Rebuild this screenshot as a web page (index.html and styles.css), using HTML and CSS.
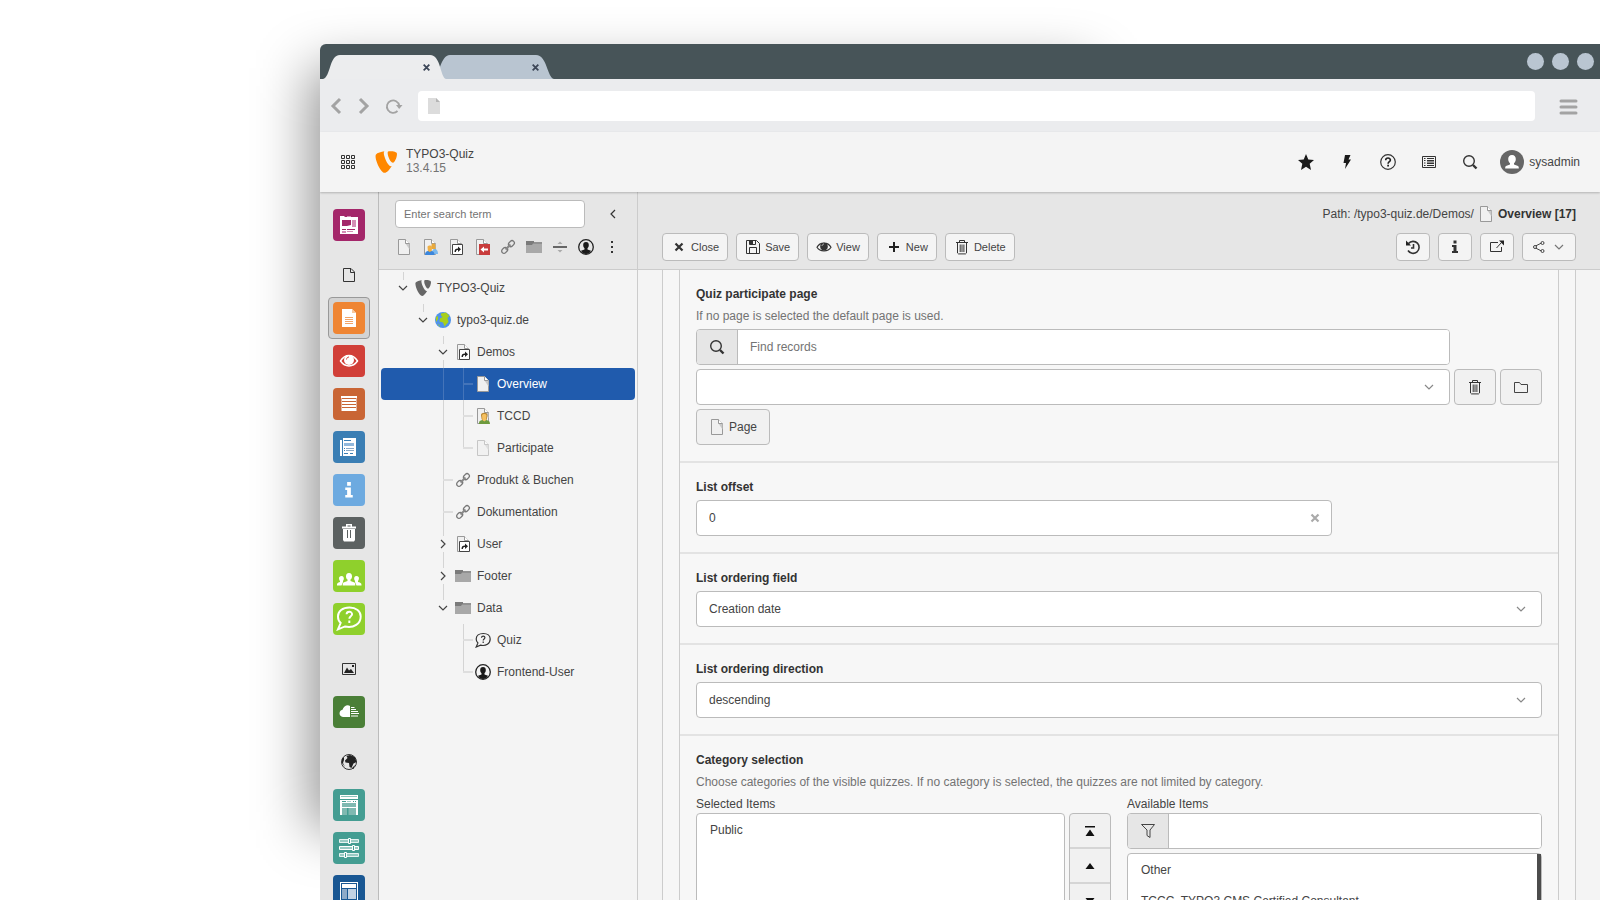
FILE: index.html
```html
<!DOCTYPE html>
<html lang="en">
<head>
<meta charset="utf-8">
<title>TYPO3-Quiz</title>
<link rel="stylesheet" href="styles.css">
</head>
<body>
<svg class="sprite" aria-hidden="true">
  <symbol id="doc" viewBox="0 0 16 16"><path d="M2.5.5h7l4 4v11h-11z" fill="#f0f0f0" stroke="#999"/><path d="M9.500.5v4l4 6v-6z" fill="#c9c9c9"/><path d="M9.500.5v4h4" fill="#fff" stroke="#999"/></symbol>
  <symbol id="doc-line" viewBox="0 0 16 16"><path d="M2.500 1.500h7.500l3.500 3.500v9.500h-11zM9.500 1.500v4h4" fill="none" stroke="#333"/></symbol>
  <symbol id="doc-user" viewBox="0 0 16 16"><use href="#doc"/><path d="M9.500 5.500c0-1.500 3.800-1.500 3.800 0L13.500 10h-4z" fill="#e8a93d"/><path d="M10 15c0-4 1-5 2.500-5 2.500 0 3.500 2 3.500 5z" fill="#7ab8ee"/><path d="M5.500 8c0-2 4.500-2 4.500 0l-.3 5H6z" fill="#f0b046"/><path d="M3 16c0-3 1.500-4 3-4l1.800 1 1.700-1c1.500 0 3 1 3 4z" fill="#3b86dc"/></symbol>
  <symbol id="doc-one" viewBox="0 0 16 16"><use href="#doc"/><path d="M6 7c0-3 6.500-3 6.500 0l-.5 3.500-1 3H7.500l-1-3z" fill="#b98732"/><path d="M7 7.500c0-2 4.500-2 4.500 0L11 13H7.500z" fill="#f5c060"/><path d="M4 16c0-3 1-3.500 3.300-4l2 1.500 2-1.500C13.500 12.500 15 13 15 16z" fill="#6d9a3d"/></symbol>
  <symbol id="doc-short" viewBox="0 0 16 16"><use href="#doc"/><path d="M4.500 5.500h10v10h-10z" fill="#fff" stroke="#444"/><path d="M10 7.500l3 2.800-3 2.700v-2c-1.500 0-2 .5-2 2H6.500C6.500 10.500 7.500 9.500 10 9.500z" fill="#222"/></symbol>
  <symbol id="doc-back" viewBox="0 0 16 16"><use href="#doc"/><path d="M5 5h11v11H5z" fill="#c83c3c"/><path d="M10 7.500v2h4v2h-4v2l-3.500-3z" fill="#fff"/></symbol>
  <symbol id="link" viewBox="0 0 16 16"><g transform="rotate(-45 8 8)" fill="none" stroke-width="1.300"><rect x="0" y="5.700" width="6.500" height="4.600" rx="2.300" stroke="#777"/><rect x="9.500" y="5.700" width="6.500" height="4.600" rx="2.300" stroke="#777"/><path d="M4.500 8h7" stroke="#888" stroke-width="2"/></g></symbol>
  <symbol id="folder" viewBox="0 0 16 16"><path d="M0 2h8v1h8v11H0z" fill="#a8a8a8"/><path d="M0 2h8v1.500h8v1H7L6 6H0z" fill="#7a7a7a"/></symbol>
  <symbol id="divider" viewBox="0 0 16 16"><path d="M1 7h14v2H1z" fill="#666"/><path d="M5.500 5L8 2.500 10.500 5zM5.500 11L8 13.500 10.500 11z" fill="#aaa"/></symbol>
  <symbol id="person" viewBox="0 0 16 16"><circle cx="8" cy="8" r="7.300" fill="none" stroke="#222" stroke-width="1.300"/><path d="M8 3c2 0 2.800 1.300 2.800 3 0 1.500-.5 2.500-1.300 3.200v1.300l3.500 1.300C12 14 10 15 8 15s-4-1-5-3.200l3.500-1.300V9.200C5.700 8.500 5.200 7.500 5.200 6c0-1.700.8-3 2.800-3z" fill="#1a1a1a"/></symbol>
  <symbol id="dots" viewBox="0 0 16 16"><path d="M7 2h2v2H7zM7 7h2v2H7zM7 12h2v2H7z" fill="#333"/></symbol>
  <symbol id="typo3" viewBox="0 0 16 16"><path d="M12.100 10.900c-.2.100-.400.100-.700.100-2 0-5-7.100-5-9.400 0-.9.200-1.100.5-1.400C4.500.5 1.600 1.400.7 2.500.5 2.800.4 3.200.4 3.800c0 3.700 3.900 12.100 6.700 12.100 1.300 0 3.400-2.100 5-5M10.900.1c2.600 0 5.100.4 5.100 1.900 0 3-1.900 6.600-2.900 6.600-1.700 0-3.900-4.800-3.900-7.200 0-1.100.4-1.300 1.700-1.300" fill="currentColor"/></symbol>
  <symbol id="globe" viewBox="0 0 16 16"><circle cx="8" cy="8" r="8" fill="#4f93ea"/><path d="M6 1.500l5-1L14.500 4l-2 2 1 4-4 4.500-1.500-4-3.500-1 .5-3 2.500-1.500L6 3.500zM1 5l2-1v3l-2 3zM2.500 12l2 1 .5 2z" fill="#a6cf1c"/></symbol>
  <symbol id="globe-bw" viewBox="0 0 16 16"><circle cx="8" cy="8" r="7.500" fill="none" stroke="#333"/><path d="M9 1l5 2 1.500 5-3 1.500-2 4.500-2-1-.5-4-3.500-.5-.5-2L6.500 4l-1-2zM11 14l3-3-1.500 4zM1 5l2-2v3l-1 3 2 4-3-4z" fill="#222"/></symbol>
  <symbol id="quiz" viewBox="0 0 16 16"><path d="M8.300 1.500C4 1.500 1.200 3.800 1.200 7c0 1.800.6 3 1.700 4L1.200 15l4.300-1.800c5.500 1.200 9.700-1.700 9.700-6.200 0-3.300-2.800-5.500-6.900-5.500z" fill="none" stroke="currentColor" stroke-width="1.200"/><path d="M6.500 5.700c.1-2 3.400-2 3.400 0 0 1.200-1.700 1.300-1.700 2.800M8.200 9.600V11" fill="none" stroke="currentColor" stroke-width="1.200"/></symbol>
  <symbol id="down" viewBox="0 0 16 16"><path d="M4 6l4 4 4-4" fill="none" stroke="currentColor" stroke-width="1.200"/></symbol>
  <symbol id="right" viewBox="0 0 16 16"><path d="M6 4l4 4-4 4" fill="none" stroke="currentColor" stroke-width="1.200"/></symbol>
  <symbol id="left" viewBox="0 0 16 16"><path d="M10 4L6 8l4 4" fill="none" stroke="currentColor" stroke-width="1.200"/></symbol>
  <symbol id="search" viewBox="0 0 16 16"><circle cx="7" cy="7" r="5.300" fill="none" stroke="#333" stroke-width="1.400"/><path d="M11 11l3.500 3.500" stroke="#333" stroke-width="2.400"/></symbol>
  <symbol id="trash" viewBox="0 0 16 16"><path d="M2 3.500h12M5.500 3.500v-2h5v2M3.500 3.500v10.500l1 .9h7l1-.9V3.500M6.200 5.500v7.500M8 5.500v7.500M9.900 5.500v7.500" fill="none" stroke="#333" stroke-width="1"/></symbol>
  <symbol id="close" viewBox="0 0 16 16"><path d="M4.500 4.500l7 7M11.500 4.500l-7 7" stroke="currentColor" stroke-width="2.200"/></symbol>
  <symbol id="save" viewBox="0 0 16 16"><path d="M1.500 1.500h10l3 3v10h-13z M4.500 1.500v4h6v-4M4.500 14.500v-6h7v6" fill="none" stroke="#333"/><path d="M5 1.500h3V5H5z" fill="#333"/></symbol>
  <symbol id="eye" viewBox="0 0 16 16"><path d="M1 8.200C4 2.700 12 2.700 15 8.200 12 13 4 13 1 8.200z" fill="none" stroke="currentColor" stroke-width="1.200"/><circle cx="8" cy="7.500" r="3.800" fill="currentColor"/><path d="M6 7c.2-1.200.9-1.900 2-2" fill="none" stroke="#bbb"/></symbol>
  <symbol id="plus" viewBox="0 0 16 16"><path d="M3 8h10M8 3v10" stroke="#222" stroke-width="2"/></symbol>
  <symbol id="history" viewBox="0 0 16 16"><path d="M3.500 4.500A6 6 0 1 1 3 11.500M8.500 5v4H6" fill="none" stroke="#333" stroke-width="1.600"/><path d="M1 1.500V6.500h5z" fill="#222"/></symbol>
  <symbol id="info" viewBox="0 0 16 16"><path d="M6.500 1.500h3v3h-3zM5 6h4.500v6H11v2H5v-2h1.500V8H5z" fill="currentColor"/></symbol>
  <symbol id="open" viewBox="0 0 16 16"><path d="M9 3.500H1.500v9h11V8M7.500 9l5-5.500" fill="none" stroke="#333"/><path d="M10 1.500h5v5z" fill="#222"/></symbol>
  <symbol id="share" viewBox="0 0 16 16"><path d="M4.500 7l6-3M4.500 9l6 3" stroke="#444"/><g fill="#f4f4f4" stroke="#444"><circle cx="4" cy="8" r="1.500"/><circle cx="11.500" cy="4" r="1.500"/><circle cx="11.500" cy="12" r="1.500"/></g></symbol>
  <symbol id="dir" viewBox="0 0 16 16"><path d="M1.500 3.500h5l1.500 2h6.500v8h-13z" fill="none" stroke="#444"/></symbol>
  <symbol id="grid" viewBox="0 0 16 16"><path d="M1.500 1.500h3v3h-3zM6.500 1.500h3v3h-3zM11.500 1.500h3v3h-3zM1.500 6.500h3v3h-3zM6.500 6.500h3v3h-3zM11.500 6.500h3v3h-3zM1.500 11.500h3v3h-3zM6.500 11.500h3v3h-3zM11.500 11.500h3v3h-3z" fill="none" stroke="#333"/></symbol>
  <symbol id="star" viewBox="0 0 16 16"><path d="M8 0l2.300 5.400 5.700.5-4.300 3.900L13 16l-5-3.200L3 16l1.300-6.200L0 5.900l5.700-.5z" fill="#1a1a1a"/></symbol>
  <symbol id="bolt" viewBox="0 0 16 16"><path d="M6 1h5.500L9.500 5.500H12L6 15l1-6H4.500z" fill="#1a1a1a"/></symbol>
  <symbol id="help" viewBox="0 0 16 16"><circle cx="8" cy="8" r="7.300" fill="none" stroke="#333" stroke-width="1.200"/><path d="M5.700 6.300c0-3 4.700-2.900 4.700-.2 0 1.600-2.300 1.600-2.300 3.600" fill="none" stroke="#222" stroke-width="1.600"/><path d="M7.200 10.800H9v1.700H7.200z" fill="#222"/></symbol>
  <symbol id="list" viewBox="0 0 16 16"><path d="M1.500 2.500h13v11h-13z" fill="none" stroke="#333"/><path d="M3 4h1.500v1H3zM3 6h1.500v1H3zM3 8.500h1.500v1H3zM3 11h1.500v1H3zM6 4h7v1H6zM6 6h7v1.500H6zM6 8.500h7V10H6zM6 11h7v1H6z" fill="#333"/></symbol>
  <symbol id="image" viewBox="0 0 16 16"><path d="M1.500 2.500h13v11h-13z" fill="none" stroke="#333"/><path d="M3 12l3-5.500 2 3L10 8l3 4zM11 4h2v2h-2z" fill="#222"/></symbol>
  <symbol id="filter" viewBox="0 0 16 16"><path d="M1.500 1.500h13L10 7v7.500L7 12.500V7z" fill="none" stroke="#444"/></symbol>
  <symbol id="top" viewBox="0 0 16 16"><path d="M3 3h10v1.500H3zM3.500 13L8 6.500l4.500 6.500z" fill="#111"/></symbol>
  <symbol id="up" viewBox="0 0 16 16"><path d="M3.500 11L8 5l4.500 6z" fill="#111"/></symbol>
  <symbol id="m-dash" viewBox="0 0 32 32"><path d="M7 7h4l1 1h13v17H7z" fill="#fff"/><path d="M9 11h9v5l-4 1H9zM9 20h4v1H9zM14 20h8v1h-8z" fill="#a4276a"/><path d="M19 11h4v7h-4zM9 22h4v2H9zM14 22h6v1h-6zM14 7h4v1h-4z" fill="#d48fb5"/></symbol>
  <symbol id="m-page" viewBox="0 0 32 32"><path d="M9 7h10l4 4v14H9z" fill="#fff"/><path d="M19 7v4h4z" fill="#f7c79c"/><path d="M12 15h8v1h-8zM12 17h8v1h-8zM12 19h8v1h-8zM12 21h8v1h-8z" fill="#f2a468"/></symbol>
  <symbol id="m-eye" viewBox="0 0 32 32"><path d="M7.500 16C12 8.500 20 8.500 24.500 16 20 22.500 12 22.500 7.500 16z" fill="none" stroke="#fff" stroke-width="1.500"/><circle cx="16" cy="15" r="5" fill="#fff"/><path d="M13.500 14.500c.2-1.500 1-2.500 2.500-2.500" fill="none" stroke="#d13f38"/></symbol>
  <symbol id="m-list" viewBox="0 0 32 32"><path d="M8 8h16v2H8zM8 11h16v2H8zM8 14h16v2H8zM8 17h16v2H8zM8 20h16v3H8z" fill="#fff"/><path d="M8 10h1v13H8zM23 10h1v13h-1z" fill="#e2b09a"/></symbol>
  <symbol id="m-news" viewBox="0 0 32 32"><path d="M7 9h2v16H7zM10 7h13v18H10z" fill="#fff"/><path d="M11 9h7v1h-7zM11 22h4v1h-4zM17 22h3v1h-3zM11 17h1v1h-1zM11 19h1v1h-1z" fill="#3a7eb4"/><path d="M11 12h10v3H11z" fill="#91b8dc"/><path d="M13 17h8v1h-8zM13 19h8v1h-8z" fill="#8aa9c7"/></symbol>
  <symbol id="m-trash" viewBox="0 0 32 32"><path d="M9 9.500h4V7h6v2.500h4v2H9zM10 12h12v11l-1 1.500H11L10 23z" fill="#fff"/><path d="M14.500 8.500h3v1h-3zM14 13v8h1v-8zM17 13v8h1v-8z" fill="#5c6161"/></symbol>
  <symbol id="m-users" viewBox="0 0 32 32"><g fill="#fff"><path d="M16 13c2.200 0 3 1.500 3 3.500 0 1.500-.7 2.500-1.500 3v1.500l4 1.500c.8.500.8 1.500.8 3H9.700c0-1.500 0-2.500.8-3l4-1.500v-1.500c-.8-.5-1.500-1.500-1.500-3 0-2 .8-3.500 3-3.500z"/><path d="M8.500 16c2 0 2.500 1.500 2.300 3-.1 1-.6 1.500-.8 2v1l-1.500 3.500H4c0-2.500.5-2.500 3-3.500v-1c-1-1-2-5 1.500-5zM23.500 16c-2 0-2.500 1.500-2.300 3 .1 1 .6 1.500.8 2v1l1.500 3.500H28.500c0-2.500-.5-2.500-3.500-3.500v-1c1-1 2-5-1.500-5z"/></g></symbol>
  <symbol id="m-cloud" viewBox="0 0 32 32"><path d="M17 21h-7c-4.500-.5-4.500-6.500-.5-7.200C10.500 9.500 15 8 17 10z" fill="#fff"/><path d="M18 11.500h3.500M18 13.500h5M18 15.500h7M18 17.500h8M18 20h7" stroke="#fff"/></symbol>
  <symbol id="m-site" viewBox="0 0 32 32"><path d="M7 6h18v4H7zM7 11h18v15h-2v-7H9v7H7z" fill="#fff"/><path d="M8 7.500h16" stroke="#8fc4bc"/><path d="M9 14h14v4H9zM9 19h5v7H9zM15.500 19H23v7h-7.500z" fill="#7fb9b1"/><path d="M9 12.500h4M14.500 12.500h1M16.500 12.500h1M20 12.500h1M22 12.500h1" stroke="#449d92"/></symbol>
  <symbol id="m-slide" viewBox="0 0 32 32"><g fill="#9acbc4" stroke="#e4f2f0"><path d="M6.500 7.500h19v3h-19zM6.500 21.500h19v3h-19z"/><path d="M6.500 14.500h19v3h-19z" stroke="#fff"/></g><g fill="#449d92" stroke="#fff"><path d="M15.500 6.500h2v5h-2zM19.500 13.500h2v5h-2zM11.500 20.500h2v5h-2z"/></g></symbol>
  <symbol id="m-layout" viewBox="0 0 32 32"><path d="M7 7h18v19H7z" fill="#fff"/><path d="M8 8h16v17H8z" fill="#195793"/><path d="M9 9h14v4H9z" fill="#fff"/><path d="M9 14h5v10H9z" fill="#8daac8"/><path d="M15 14h8v10h-8z" fill="#c3d3e4"/></symbol>
</svg>

<div class="backdrop"></div>
<div class="window">
  <div class="titlebar">
    <div class="tabs">
      <svg class="tab-shapes" width="240" height="25" viewBox="0 0 240 25" aria-hidden="true"><path d="M112 25c8-2 8-24 18-24h86c11 0 11 22 18 24z" fill="#b9c5d1"/><path d="M3 25C11 23 9 1 20 1h90c11 0 10 22 16 24z" fill="#ecedee"/></svg>
      <button class="tab-close" aria-label="Close tab"><svg><use href="#close"/></svg></button>
      <button class="tab-close" aria-label="Close tab"><svg><use href="#close"/></svg></button>
    </div>
    <div class="lamps"><i></i><i></i><i></i></div>
  </div>
  <div class="addressbar">
    <button aria-label="Back"><svg width="14" height="18" viewBox="0 0 14 18"><path d="M11 2L4 9l7 7" fill="none" stroke="#a3a3a3" stroke-width="3"/></svg></button>
    <button aria-label="Forward"><svg width="14" height="18" viewBox="0 0 14 18"><path d="M3 2l7 7-7 7" fill="none" stroke="#a3a3a3" stroke-width="3"/></svg></button>
    <button class="reload" aria-label="Reload"><svg width="18" height="18" viewBox="0 0 18 18"><path d="M12.500 14A6.200 6.200 0 1 1 14.200 8.500" fill="none" stroke="#a3a3a3" stroke-width="1.800"/><path d="M11 8h6.500L14.200 12z" fill="#a3a3a3"/></svg></button>
    <label class="url"><svg width="12" height="16" viewBox="0 0 12 16"><path d="M0 0h8l4 4v12H0z" fill="#dcdcdc"/><path d="M8 0v4h4z" fill="#b5b5b5"/></svg><input type="text" aria-label="Address"></label>
    <button class="burger" aria-label="Menu"><svg width="20" height="18" viewBox="0 0 20 18"><path d="M2 4h15M2 10h15M2 16h15" stroke="#a3a3a3" stroke-width="3" stroke-linecap="round"/></svg></button>
  </div>

  <header class="top">
    <button class="apps" aria-label="Toggle modules"><svg><use href="#grid"/></svg></button>
    <svg class="logo"><use href="#typo3"/></svg>
    <div class="site"><span>TYPO3-Quiz</span><span class="muted">13.4.15</span></div>
    <div class="tools">
      <button aria-label="Bookmarks"><svg><use href="#star"/></svg></button>
      <button aria-label="Clear cache"><svg><use href="#bolt"/></svg></button>
      <button aria-label="Help"><svg><use href="#help"/></svg></button>
      <button aria-label="System information"><svg><use href="#list"/></svg></button>
      <button aria-label="Search"><svg><use href="#search"/></svg></button>
      <button class="user"><svg viewBox="0 0 24 24"><circle cx="12" cy="12" r="12" fill="#666"/><path d="M12 5c2.600 0 3.800 1.700 3.800 4 0 2-.8 3.400-1.800 4.200v1.300l4 1.500c.8.400.8 1.500.8 2.500H5.200c0-1 0-2.100.8-2.500l4-1.500v-1.300C9 12.400 8.200 11 8.200 9c0-2.300 1.200-4 3.800-4z" fill="#fff"/></svg>sysadmin</button>
    </div>
  </header>

  <div class="body">
    <nav class="rail" aria-label="Modules">
      <div class="group"><button aria-label="Dashboard"><svg class="magenta"><use href="#m-dash"/></svg></button></div>
      <div class="group">
        <button aria-label="Web"><svg class="plain"><use href="#doc-line"/></svg></button>
        <button class="active" aria-label="Page"><svg class="orange"><use href="#m-page"/></svg></button>
        <button aria-label="View"><svg class="red"><use href="#m-eye"/></svg></button>
        <button aria-label="List"><svg class="rust"><use href="#m-list"/></svg></button>
        <button aria-label="News"><svg class="blue"><use href="#m-news"/></svg></button>
        <button aria-label="Info"><svg class="sky" viewBox="0 0 32 32"><use href="#info" x="6" y="6" width="20" height="20"/></svg></button>
        <button aria-label="Recycler"><svg class="grey"><use href="#m-trash"/></svg></button>
        <button aria-label="Users"><svg class="lime"><use href="#m-users"/></svg></button>
        <button aria-label="Quiz"><svg class="lime" viewBox="0 0 32 32"><use href="#quiz" x="3" y="2" width="26" height="26"/></svg></button>
      </div>
      <div class="group">
        <button aria-label="File"><svg class="plain"><use href="#image"/></svg></button>
        <button aria-label="Filelist"><svg class="forest"><use href="#m-cloud"/></svg></button>
      </div>
      <div class="group">
        <button aria-label="Sites"><svg class="plain"><use href="#globe-bw"/></svg></button>
        <button aria-label="Site configuration"><svg class="teal"><use href="#m-site"/></svg></button>
        <button aria-label="Settings"><svg class="teal"><use href="#m-slide"/></svg></button>
        <button aria-label="Templates"><svg class="navy"><use href="#m-layout"/></svg></button>
      </div>
    </nav>

    <aside class="nav">
      <div class="nav-head">
        <div class="nav-search">
          <input type="text" placeholder="Enter search term" aria-label="Enter search term">
          <button aria-label="Collapse"><svg><use href="#left"/></svg></button>
        </div>
        <div class="nav-tools">
          <button aria-label="New page"><svg><use href="#doc"/></svg></button>
          <button aria-label="Backend user section"><svg><use href="#doc-user"/></svg></button>
          <button aria-label="Shortcut"><svg><use href="#doc-short"/></svg></button>
          <button aria-label="Mount point"><svg><use href="#doc-back"/></svg></button>
          <button aria-label="Link"><svg><use href="#link"/></svg></button>
          <button aria-label="Folder"><svg><use href="#folder"/></svg></button>
          <button aria-label="Separator"><svg><use href="#divider"/></svg></button>
          <button aria-label="User"><svg><use href="#person"/></svg></button>
          <button aria-label="More"><svg><use href="#dots"/></svg></button>
        </div>
      </div>
      <ul class="tree">
        <li><i class="c up"><svg><use href="#down"/></svg></i><svg class="ic grey-ic"><use href="#typo3"/></svg>TYPO3-Quiz</li>
        <li><i class="c"></i><i class="c up"><svg><use href="#down"/></svg></i><svg class="ic"><use href="#globe"/></svg>typo3-quiz.de</li>
        <li><i class="c"></i><i class="c"></i><i class="c up dn"><svg><use href="#down"/></svg></i><svg class="ic"><use href="#doc-short"/></svg>Demos</li>
        <li class="sel"><i class="c"></i><i class="c"></i><i class="c v"></i><i class="c v h"></i><svg class="ic"><use href="#doc"/></svg>Overview</li>
        <li><i class="c"></i><i class="c"></i><i class="c v"></i><i class="c v h"></i><svg class="ic"><use href="#doc-one"/></svg>TCCD</li>
        <li><i class="c"></i><i class="c"></i><i class="c v"></i><i class="c l h"></i><svg class="ic faded"><use href="#doc"/></svg>Participate</li>
        <li><i class="c"></i><i class="c"></i><i class="c v h"></i><svg class="ic"><use href="#link"/></svg>Produkt &amp; Buchen</li>
        <li><i class="c"></i><i class="c"></i><i class="c v h"></i><svg class="ic"><use href="#link"/></svg>Dokumentation</li>
        <li><i class="c"></i><i class="c"></i><i class="c up dn"><svg><use href="#right"/></svg></i><svg class="ic"><use href="#doc-short"/></svg>User</li>
        <li><i class="c"></i><i class="c"></i><i class="c up dn"><svg><use href="#right"/></svg></i><svg class="ic"><use href="#folder"/></svg>Footer</li>
        <li><i class="c"></i><i class="c"></i><i class="c up"><svg><use href="#down"/></svg></i><svg class="ic"><use href="#folder"/></svg>Data</li>
        <li><i class="c"></i><i class="c"></i><i class="c"></i><i class="c v h"></i><svg class="ic"><use href="#quiz"/></svg>Quiz</li>
        <li><i class="c"></i><i class="c"></i><i class="c"></i><i class="c l h"></i><svg class="ic"><use href="#person"/></svg>Frontend-User</li>
      </ul>
    </aside>

    <main class="main">
      <div class="dochead">
        <div class="path">Path: /typo3-quiz.de/Demos/<svg><use href="#doc"/></svg><b>Overview [17]</b></div>
        <div class="bar">
          <button class="btn"><svg><use href="#close"/></svg>Close</button>
          <button class="btn"><svg><use href="#save"/></svg>Save</button>
          <button class="btn"><svg><use href="#eye"/></svg>View</button>
          <button class="btn"><svg><use href="#plus"/></svg>New</button>
          <button class="btn"><svg><use href="#trash"/></svg>Delete</button>
          <span class="spring"></span>
          <button class="btn" aria-label="History"><svg><use href="#history"/></svg></button>
          <button class="btn" aria-label="Info"><svg><use href="#info"/></svg></button>
          <button class="btn" aria-label="Open in new window"><svg><use href="#open"/></svg></button>
          <button class="btn" aria-label="Share"><svg><use href="#share"/></svg><svg class="soft"><use href="#down"/></svg></button>
        </div>
      </div>
      <div class="scroll">
        <div class="outer"><div class="inner">
          <section class="field">
            <label class="title" for="find">Quiz participate page</label>
            <p class="hint">If no page is selected the default page is used.</p>
            <div class="records">
              <div class="stack">
                <div class="group-input"><span class="addon"><svg><use href="#search"/></svg></span><input id="find" type="text" placeholder="Find records"></div>
                <div class="select"><select aria-label="Selected page"><option></option></select><svg><use href="#down"/></svg></div>
              </div>
              <button class="sq" aria-label="Remove"><svg><use href="#trash"/></svg></button>
              <button class="sq" aria-label="Browse"><svg><use href="#dir"/></svg></button>
            </div>
            <button class="sq page"><svg><use href="#doc"/></svg>Page</button>
          </section>
          <section class="field">
            <label class="title" for="offset">List offset</label>
            <div class="clearable"><input id="offset" type="text" value="0"><button aria-label="Clear"><svg><use href="#close"/></svg></button></div>
          </section>
          <section class="field">
            <label class="title" for="order">List ordering field</label>
            <div class="select"><select id="order"><option>Creation date</option></select><svg><use href="#down"/></svg></div>
          </section>
          <section class="field">
            <label class="title" for="dir-select">List ordering direction</label>
            <div class="select"><select id="dir-select"><option>descending</option></select><svg><use href="#down"/></svg></div>
          </section>
          <section class="field">
            <h2 class="title">Category selection</h2>
            <p class="hint">Choose categories of the visible quizzes. If no category is selected, the quizzes are not limited by category.</p>
            <div class="transfer">
              <div class="side">
                <label for="chosen">Selected Items</label>
                <div class="move-row">
                  <select id="chosen" class="listbox" multiple><option>Public</option></select>
                  <div class="movers">
                    <button aria-label="Move to top"><svg><use href="#top"/></svg></button>
                    <button aria-label="Move up"><svg><use href="#up"/></svg></button>
                    <button aria-label="Move down"><svg class="flip"><use href="#up"/></svg></button>
                  </div>
                </div>
              </div>
              <div class="side">
                <label for="avail">Available Items</label>
                <div class="group-input"><span class="addon"><svg><use href="#filter"/></svg></span><input type="text" aria-label="Filter items"></div>
                <div class="scrollbox"><select id="avail" class="listbox" multiple><option>Other</option><option>TCCC, TYPO3 CMS Certified Consultant</option></select><span class="thumb"></span></div>
              </div>
            </div>
          </section>
        </div></div>
      </div>
    </main>
  </div>
</div>
</body>
</html>
```
FILE: styles.css
```css
* { box-sizing: border-box; }
body {
  margin: 0;
  height: 100vh;
  overflow: hidden;
  background: #fff;
  color: #444;
  font: 12px/16px "Liberation Sans", Arial, sans-serif;
}
button, input, select { font: inherit; color: inherit; margin: 0; }
button { background: none; border: 0; padding: 0; display: flex; align-items: center; justify-content: center; }
svg { display: block; width: 16px; height: 16px; flex: none; color: #333; }
.sprite { position: absolute; width: 0; height: 0; }

/* soft shadow behind the browser window */
.backdrop {
  position: absolute;
  left: 310px;
  top: 68px;
  width: 780px;
  height: 762px;
  background: rgba(0, 0, 0, .42);
  filter: blur(27px);
}
.window {
  position: relative;
  display: flex;
  flex-direction: column;
  margin: 44px 0 0 320px;
  height: calc(100vh - 44px);
  overflow: hidden;
  border-top-left-radius: 6px;
  background: #ebecee;
}

.titlebar { display: flex; justify-content: space-between; height: 35px; background: #475458; }
.tabs { position: relative; display: flex; align-self: flex-end; width: 240px; height: 25px; padding-left: 98px; gap: 93px; }
.tab-shapes { position: absolute; left: 0; top: 0; width: 240px; height: 25px; }
.tab-close { position: relative; width: 16px; height: 26px; }
.tab-close svg { width: 13px; height: 13px; color: #3c4657; }
.lamps { display: flex; gap: 8px; align-items: center; padding-right: 6px; }
.lamps i { width: 17px; height: 17px; border-radius: 50%; background: #b9c5d1; }

.addressbar { display: flex; align-items: center; height: 53px; padding: 0 21px 0 9px; }
.addressbar button svg { width: auto; height: 18px; }
.addressbar button + button { margin-left: 14px; }
.addressbar .reload { margin-right: 15px; }
.url { display: flex; align-items: center; flex: 1; height: 30px; padding: 0 10px; border-radius: 4px; background: #fff; }
.url svg { width: 12px; height: 16px; }
.url input { flex: 1; border: 0; background: none; outline: 0; }
.addressbar .burger { margin-left: 24px; }

.top {
  position: relative;
  z-index: 1;
  display: flex;
  align-items: center;
  height: 60px;
  padding: 0 20px;
  background: #f4f4f4;
  box-shadow: 0 1px 2px rgba(0, 0, 0, .22);
}
.logo { width: 22px; height: 22px; margin-left: 19px; color: #ff8700; }
.site { display: flex; flex-direction: column; margin-left: 9px; line-height: 14px; padding-bottom: 2px; }
.muted { color: #737373; }
.tools { display: flex; gap: 25px; margin-left: auto; }
.user { gap: 5px; margin-left: -3px; }
.user svg { width: 24px; height: 24px; }

.body { display: flex; flex: 1; min-height: 0; }
.rail { display: flex; flex-direction: column; gap: 8px; width: 59px; flex: none; padding: 12px 8px; border-right: 1px solid #bbb; background: #e6e6e6; overflow: hidden; }
.group { display: flex; flex-direction: column; gap: 1px; }
.rail button { width: 42px; height: 42px; border: 1px solid transparent; border-radius: 4px; }
.rail .active { border-color: #999; background: #d3d3d3; }
.rail svg { width: 32px; height: 32px; border-radius: 4px; color: #fff; }
.rail svg.plain { width: 16px; height: 16px; border-radius: 0; }
.magenta { background: #a4276a; }
.orange { background: #ef8533; }
.red { background: #d13f38; }
.rust { background: #c96535; }
.blue { background: #3a7eb4; }
.sky { background: #6daae0; }
.grey { background: #5c6161; }
.lime { background: #8fd02c; }
.forest { background: #4a7f37; }
.teal { background: #449d92; }
.navy { background: #195793; }

.nav { display: flex; flex-direction: column; width: 259px; flex: none; border-right: 1px solid #ccc; background: #f4f4f4; }
.nav-head { height: 78px; padding: 8px 10px 0 16px; border-bottom: 1px solid #ccc; background: #e6e6e6; }
.nav-search { display: flex; align-items: center; justify-content: space-between; }
.nav-search input { width: 190px; height: 28px; padding: 0 8px; border: 1px solid #bbb; border-radius: 4px; background: #fff; font-size: 11px; }
.nav-search button { width: 28px; height: 28px; }
::placeholder { color: #737373; opacity: 1; }
.nav-tools { display: flex; gap: 10px; margin-top: 11px; padding-left: 1px; }
.tree { list-style: none; margin: 0; padding: 2px; }
.tree li { display: flex; align-items: center; height: 32px; padding-left: 12px; border-radius: 4px; }
.tree .ic { margin: 0 6px 0 2px; }
.grey-ic { color: #666; }
.faded { opacity: .5; }
.c { position: relative; display: flex; align-items: center; justify-content: center; width: 20px; height: 32px; flex: none; }
.c svg { color: #444; }
.c::before, .c::after { position: absolute; background: #d4d4d4; }
.v::before, .l::before { content: ""; left: 10px; top: 0; width: 1px; height: 32px; }
.l::before { height: 17px; }
.h::after { content: ""; left: 10px; top: 15px; width: 10px; height: 2px; background: #dedede; }
.up::before { content: ""; left: 10px; top: 0; width: 1px; height: 8px; }
.dn::after { content: ""; left: 10px; top: 24px; width: 1px; height: 8px; }
.tree .sel { background: #205bad; color: #fff; }
.sel .c::before, .sel .c::after { background: #4474b9; }

.main { display: flex; flex-direction: column; flex: 1; min-width: 0; background: #f4f4f4; }
.dochead { flex: none; height: 78px; padding: 14px 24px 0; border-bottom: 1px solid #ccc; background: #e6e6e6; }
.path { display: flex; align-items: center; justify-content: flex-end; }
.path svg { margin: 0 4px; }
.path b { color: #333; }
.bar { display: flex; gap: 8px; margin-top: 11px; }
.spring { flex: 1; }
.btn { gap: 4px; height: 28px; padding: 0 8px; border: 1px solid #bbb; border-radius: 4px; background: #f4f4f4; font-size: 11px; }
.soft { color: #777; }

.scroll { flex: 1; min-height: 0; overflow: hidden; padding: 0 24px; }
.outer { padding: 0 16px; border: 1px solid #ccc; border-width: 0 1px; background: #f6f6f6; }
.inner { border: 1px solid #ccc; border-width: 0 1px; background: #f7f7f7; }
.field { padding: 16px; border-bottom: 2px solid #e3e3e3; }
.field:last-child { border-bottom: 0; }
.title { display: block; margin: 0 0 5px; font: bold 12px/16px "Liberation Sans", Arial, sans-serif; color: #333; }
.hint { margin: 6px 0 5px; color: #737373; }
.records { display: flex; align-items: flex-end; gap: 4px; }
.stack { display: flex; flex-direction: column; flex: 1; gap: 4px; }
.group-input, .select select, .clearable, .listbox, .sq, .movers { border: 1px solid #bbb; border-radius: 4px; background: #fff; }
.group-input { display: flex; height: 36px; overflow: hidden; }
.group-input input { flex: 1; min-width: 0; padding: 0 12px; border: 0; outline: 0; background: #fff; }
.addon { display: flex; align-items: center; justify-content: center; width: 41px; border-right: 1px solid #bbb; background: #e6e6e6; }
.select { display: grid; align-items: center; }
.select > * { grid-area: 1 / 1; }
.select select { appearance: none; width: 100%; height: 36px; padding: 0 12px; outline: 0; }
.select svg { justify-self: end; margin-right: 13px; color: #888; pointer-events: none; }
.sq { width: 42px; height: 36px; background: #f1f1f1; }
.page { gap: 4px; width: auto; margin-top: 4px; padding: 0 12px; }
.clearable { display: flex; align-items: center; width: 636px; max-width: 100%; height: 36px; padding-right: 8px; }
.clearable input { flex: 1; padding: 0 12px; border: 0; outline: 0; background: none; }
.clearable svg { color: #aaa; }

.transfer { display: grid; grid-template-columns: 1fr 1fr; gap: 16px; margin-top: 6px; }
.side > label { display: block; margin-bottom: 1px; }
.move-row { display: flex; gap: 4px; }
.listbox { flex: 1; height: 180px; min-width: 0; padding: 0; overflow: hidden; outline: 0; }
.listbox option { min-height: 31px; padding: 9px 13px 6px; line-height: 16px; }
.movers { width: 42px; height: 180px; background: #f1f1f1; }
.movers button { width: 100%; height: 35px; border-bottom: 2px solid #d5d5d5; }
.flip { transform: rotate(180deg); }
.scrollbox { display: flex; position: relative; margin-top: 4px; }
.thumb { position: absolute; right: 1px; top: 1px; width: 4px; height: 100px; background: #4c4c4c; }
```
